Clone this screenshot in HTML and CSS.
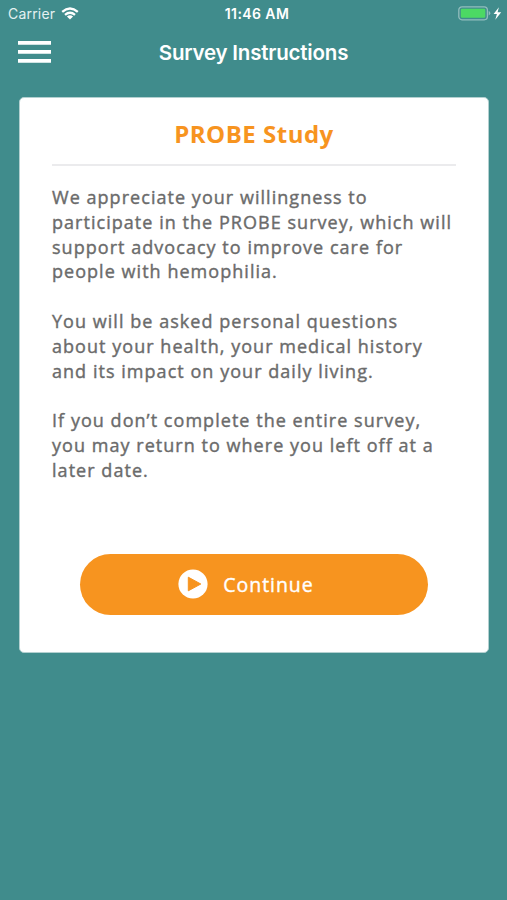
FILE: index.html
```html
<!DOCTYPE html>
<html lang="en">
<head>
<meta charset="utf-8">
<title>Survey Instructions</title>
<link rel="stylesheet" href="styles.css">
</head>
<body>
<div class="status">
  <div class="carrier"><span>Carrier</span>
    <svg class="wifi" width="18" height="13" viewBox="0 0 18 13"><g fill="none" stroke="#fff" stroke-width="2.3"><path d="M1.2 4.8Q9-1.9 16.8 4.8"/><path d="M4 7.9Q9 3.7 14 7.9"/></g><path fill="#fff" d="M5.9 9.4Q9 7 12.1 9.4L9 12.5Z"/></svg>
  </div>
  <div class="time">11:46 AM</div>
  <div class="power">
    <svg width="44" height="16" viewBox="0 0 44 16"><rect x=".8" y=".8" width="28.6" height="13" rx="3.2" fill="none" stroke="#92bdbd" stroke-width="1.3"/><rect x="2.8" y="2.8" width="24.5" height="9" rx="1.2" fill="#4cd964"/><path fill="#92bdbd" d="M30.7 5.1Q32.3 5.7 32.3 7.3T30.7 9.5Z"/><path fill="#fff" d="M40.9 1.2L35.6 8.1H38.9L37.3 13.8L43.2 6.3H39.6Z"/></svg>
  </div>
</div>
<header class="nav">
  <svg class="menu" width="33" height="24" viewBox="0 0 33 24"><path fill="#fff" d="M0 1H33V4.7H0ZM0 10H33V13.7H0ZM0 19H33V22.7H0Z"/></svg>
  <h1>Survey Instructions</h1>
</header>
<main class="card">
  <h2>PROBE Study</h2>
  <div class="copy">
    <p>We appreciate your willingness to<br>participate in the PROBE survey, which will<br>support advocacy to improve care for<br>people with hemophilia.</p>
    <p>You will be asked personal questions<br>about your health, your medical history<br>and its impact on your daily living.</p>
    <p>If you don’t complete the entire survey,<br>you may return to where you left off at a<br>later date.</p>
  </div>
  <button class="continue" type="button">
    <svg width="30" height="30" viewBox="0 0 30 30"><circle cx="15" cy="15" r="14.6" fill="#fff"/><path d="M10.3 8.2V21.8L22.8 15Z" fill="#f7941f" stroke="#f7941f" stroke-width="1" stroke-linejoin="round"/></svg>
    <span>Continue</span>
  </button>
</main>
</body>
</html>
```
FILE: styles.css
```css
* { box-sizing: border-box; }
body {
  margin: 0;
  min-height: 900px;
  background: #408c8c;
  color: #fff;
  font-family: Inter, "Liberation Sans", sans-serif;
}
svg { display: block; }
.status {
  display: grid;
  grid-template-columns: 1fr auto 1fr;
  align-items: center;
  height: 27px;
  padding: 0 5px 0 8px;
  font-size: 14px;
}
.carrier { display: flex; align-items: center; gap: 6px; letter-spacing: .2px; color: #e4f1f1; }
.time { font-weight: 600; font-size: 14px; letter-spacing: .4px; padding-left: 4px; }
.power { display: flex; justify-content: flex-end; }
.nav {
  display: grid;
  grid-template-columns: 33px 1fr 33px;
  align-items: center;
  height: 50px;
  padding: 0 18px;
}
h1 { margin: 0; padding-top: 1px; text-align: center; font-size: 20.5px; font-weight: 600; letter-spacing: -.2px; }
.card {
  width: 470px;
  height: 556px;
  margin: 20px 0 0 19px;
  padding: 0 32px;
  border: 1px solid #b3d0d0;
  border-radius: 5px;
  background: #fff;
  font-family: "Open Sans", "Noto Sans", sans-serif;
}
h2 {
  height: 68px;
  margin: 0 0 19px;
  padding-top: 4px;
  border-bottom: 2px solid #ebebed;
  color: #f7941f;
  font-size: 24px;
  font-weight: 700;
  line-height: 64px;
  letter-spacing: .5px;
  text-align: center;
}
.copy {
  height: 369px;
  color: #6b6b6b;
  font-size: 18px;
  line-height: 24.8px;
  letter-spacing: 1.04px;
  white-space: nowrap;
  -webkit-text-stroke: .4px;
}
p { margin: 0 0 24.8px; }
.continue {
  display: flex;
  align-items: center;
  justify-content: center;
  gap: 15px;
  width: 348px;
  height: 61px;
  margin: 0 auto;
  padding: 0 16px 2px 0;
  border: 0;
  border-radius: 31px;
  background: #f7941f;
  color: #fff;
  font: 400 19.5px "Open Sans", "Noto Sans", sans-serif;
  letter-spacing: .95px;
  -webkit-text-stroke: .4px;
}
.continue span { padding-top: 2px; }
```
